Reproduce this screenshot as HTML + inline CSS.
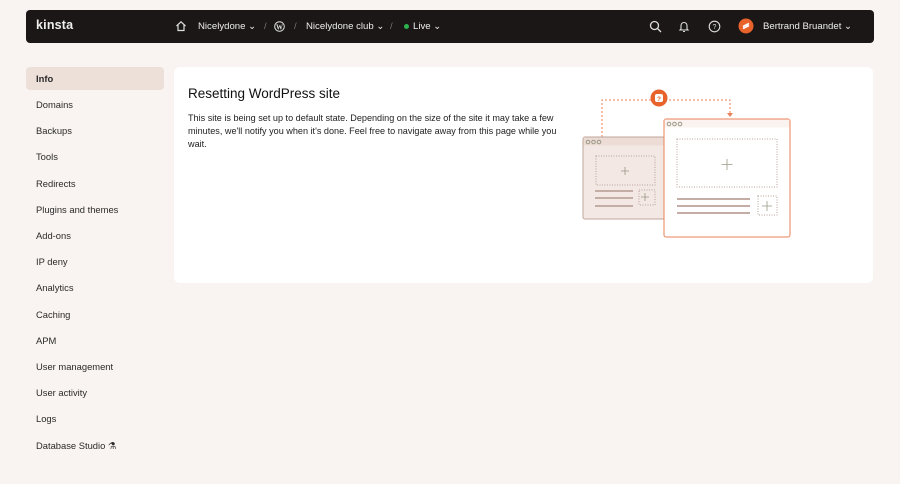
<!DOCTYPE html>
<html><head><meta charset="utf-8"><style>
*{margin:0;padding:0;box-sizing:border-box}
body{width:900px;height:484px;background:#f9f4f1;font-family:"Liberation Sans",sans-serif;position:relative;overflow:hidden;color:#222}
.hdr{position:absolute;left:26px;top:10px;width:848px;height:33px;background:#1b1716;border-radius:4px;color:#eee;font-size:9.6px}
.hdr span{position:absolute;top:11px}
.side div{position:absolute;left:26px;width:138px;height:23px;padding-left:10px;line-height:23px;font-size:9.4px;color:#2a2a2a;border-radius:4px}
.card{position:absolute;left:174px;top:67px;width:699px;height:216px;background:#fff;border-radius:6px}
h1{position:absolute;left:188px;top:86px;font-size:13.5px;font-weight:normal;color:#111}
p{position:absolute;left:188px;top:112px;width:372px;font-size:9.1px;line-height:13px;color:#222}
</style></head><body>
<div class="hdr">
<span style="left:10px;top:8px;font-size:12.5px;font-weight:bold;letter-spacing:.2px">kinsta</span>
<svg style="position:absolute;left:149px;top:10px" width="12" height="12" viewBox="0 0 12 12" fill="none" stroke="#ddd" stroke-width="1.2"><path d="M1.5 6L6 1.8 10.5 6M3 5v5.5h6V5"/></svg>
<span style="left:172px">Nicelydone &#8964;</span>
<span style="left:238px;color:#777">/</span>
<svg style="position:absolute;left:248px;top:11px" width="11" height="11" viewBox="0 0 11 11"><circle cx="5.5" cy="5.5" r="4.8" fill="none" stroke="#ddd" stroke-width="1"/><text x="5.5" y="8.3" font-size="7" text-anchor="middle" fill="#ddd" font-family="Liberation Serif" font-weight="bold">W</text></svg>
<span style="left:268px;color:#777">/</span>
<span style="left:280px">Nicelydone club &#8964;</span>
<span style="left:364px;color:#777">/</span>
<span style="left:378px;top:14px;width:5px;height:5px;border-radius:50%;background:#2bb24c"></span>
<span style="left:387px">Live &#8964;</span>
<svg style="position:absolute;left:623px;top:10px" width="13" height="13" viewBox="0 0 13 13" fill="none" stroke="#ddd" stroke-width="1.3"><circle cx="5.5" cy="5.5" r="4"/><path d="M8.5 8.5l3.5 3.5"/></svg>
<svg style="position:absolute;left:652px;top:10px" width="12" height="13" viewBox="0 0 12 13" fill="none" stroke="#ddd" stroke-width="1.1"><path d="M3 9V5.5a3 3 0 016 0V9l1 1H2zM5 11.5h2"/></svg>
<svg style="position:absolute;left:682px;top:10px" width="13" height="13" viewBox="0 0 13 13" fill="none" stroke="#ddd" stroke-width="1.1"><circle cx="6.5" cy="6.5" r="5.3"/><text x="6.5" y="9" font-size="7" text-anchor="middle" fill="#ddd" stroke="none">?</text></svg>
<svg style="position:absolute;left:712px;top:8px" width="16" height="16" viewBox="0 0 16 16"><circle cx="8" cy="8" r="7.5" fill="#e8622c"/><path d="M5 10.5l6-3M5 8.5l6-3" stroke="#fff" stroke-width="1.6"/></svg>
<span style="left:737px">Bertrand Bruandet</span>
<span style="left:818px">&#8964;</span>
</div>
<div class="side">
<div style="top:67px;background:#ede0d9;font-weight:bold">Info</div>
<div style="top:93px">Domains</div>
<div style="top:119px">Backups</div>
<div style="top:145px">Tools</div>
<div style="top:172px">Redirects</div>
<div style="top:198px">Plugins and themes</div>
<div style="top:224px">Add-ons</div>
<div style="top:250px">IP deny</div>
<div style="top:276px">Analytics</div>
<div style="top:303px">Caching</div>
<div style="top:329px">APM</div>
<div style="top:355px">User management</div>
<div style="top:381px">User activity</div>
<div style="top:407px">Logs</div>
<div style="top:434px">Database Studio &#9879;</div>
</div>
<div class="card"></div>
<h1>Resetting WordPress site</h1>
<p>This site is being set up to default state. Depending on the size of the site it may take a few minutes, we'll notify you when it's done. Feel free to navigate away from this page while you wait.</p>
<svg style="position:absolute;left:570px;top:80px" width="240" height="170" viewBox="570 80 240 170">
<path d="M602 137V100H730v15" fill="none" stroke="#e8825a" stroke-width="1" stroke-dasharray="2 2"/>
<path d="M727 113l3 4 3-4" fill="#e8825a"/>
<rect x="583" y="137" width="100" height="82" rx="2" fill="#f3e8e3" stroke="#bfa69c"/>
<rect x="583.5" y="137.5" width="99" height="8" fill="#ecdcd5"/>
<circle cx="588" cy="142" r="1.8" fill="none" stroke="#998"/><circle cx="593.5" cy="142" r="1.8" fill="none" stroke="#998"/><circle cx="599" cy="142" r="1.8" fill="none" stroke="#998"/>
<rect x="596" y="156" width="59" height="29" fill="none" stroke="#b8a39b" stroke-dasharray="1 1.5"/>
<path d="M625 167v8M621 171h8M645 193v8M641 197h8" stroke="#998" stroke-width=".8"/>
<rect x="639" y="190" width="16" height="15" fill="none" stroke="#b8a39b" stroke-dasharray="1 1.5"/>
<path d="M595 191h38M595 198h38M595 206h38" stroke="#c4ada4" stroke-width="2"/>
<rect x="664" y="119" width="126" height="118" rx="2" fill="#fff" stroke="#e8825a"/>
<rect x="664.5" y="119.5" width="125" height="8" fill="#fbf3ef"/>
<circle cx="669" cy="124" r="1.8" fill="none" stroke="#998"/><circle cx="674.5" cy="124" r="1.8" fill="none" stroke="#998"/><circle cx="680" cy="124" r="1.8" fill="none" stroke="#998"/>
<rect x="677" y="139" width="100" height="48" fill="none" stroke="#b8a39b" stroke-dasharray="1 1.5"/>
<path d="M727 159v11M721.5 164.5h11M767 201v10M762 206h10" stroke="#998" stroke-width=".8"/>
<rect x="758" y="196" width="19" height="19" fill="none" stroke="#b8a39b" stroke-dasharray="1 1.5"/>
<path d="M677 199h73M677 206h73M677 213h73" stroke="#c4ada4" stroke-width="2"/>
<circle cx="659" cy="98" r="8.5" fill="#e8622c"/>
<rect x="655" y="94" width="8" height="8" rx="2" fill="#fff"/>
<text x="659" y="101" font-size="6.5" text-anchor="middle" fill="#e8622c" font-weight="bold">?</text>
</svg>
</body></html>
